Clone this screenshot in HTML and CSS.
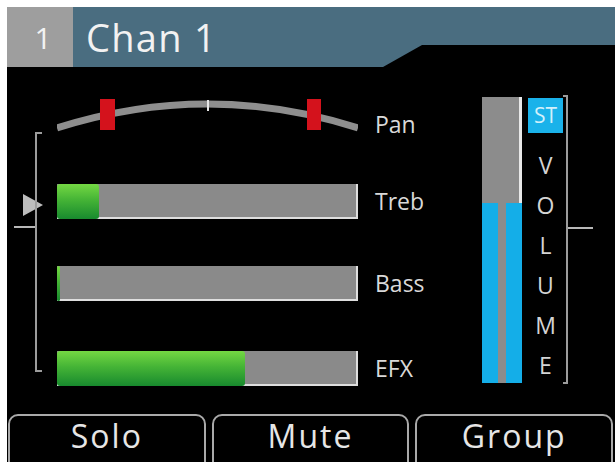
FILE: index.html
```html
<!DOCTYPE html>
<html lang="en">
<head>
<meta charset="utf-8">
<title>Chan 1</title>
<link rel="stylesheet" href="styles.css">
</head>
<body>
<div class="screen">
  <header class="header">
    <div class="chan-num">1</div>
    <div class="chan-title">Chan 1</div>
  </header>

  <main class="main">
    <div class="gutter">
      <span class="pointer"></span>
      <span class="stub"></span>
    </div>
    <div class="brace brace-left"></div>

    <div class="controls">
      <svg class="pan" width="301" height="36" viewBox="0 0 301 36">
        <path d="M0 31 Q150.5 -17 301 31" fill="none" stroke="#8e8e8e" stroke-width="7"/>
        <line x1="151" y1="3" x2="151" y2="14" stroke="#e6e6e6" stroke-width="2"/>
        <rect x="43" y="2" width="15" height="31" fill="#d4121c"/>
        <rect x="250" y="2" width="14" height="31" fill="#d4121c"/>
      </svg>
      <span class="label">Pan</span>

      <div class="track"><div class="fill" style="width:42px"></div></div>
      <span class="label">Treb</span>

      <div class="track"><div class="fill" style="width:3px"></div></div>
      <span class="label">Bass</span>

      <div class="track"><div class="fill" style="width:188px"></div></div>
      <span class="label">EFX</span>
    </div>

    <div class="meter">
      <div class="channel"><div class="level" style="height:63%"></div></div>
      <div class="channel channel-right"><div class="level" style="height:63%"></div></div>
    </div>

    <div class="volume">
      <span class="st">ST</span>
      <span class="letters">V O L U M E</span>
    </div>
    <div class="brace brace-right"></div>
    <span class="stub stub-right"></span>
  </main>

  <nav class="buttons">
    <button class="btn">Solo</button>
    <button class="btn">Mute</button>
    <button class="btn">Group</button>
  </nav>
</div>
</body>
</html>
```

FILE: styles.css
```css
* {
  box-sizing: border-box;
}

html, body {
  margin: 0;
  background: #ffffff;
  overflow: hidden;
}

body {
  font-family: "Open Sans", "Noto Sans", sans-serif;
}

.screen {
  margin: 7px 0 0 7px;
  width: 608px;
  height: 455px;
  background: #000000;
  overflow: hidden;
}

/* title bar */
.header {
  display: flex;
  height: 60px;
  color: #f2f2f2;
}

.chan-num {
  width: 66px;
  flex-shrink: 0;
  background: #9e9e9e;
  font-size: 30px;
  line-height: 60px;
  padding: 1px 0 0 6px;
  text-align: center;
}

.chan-title {
  flex: 1;
  background: #4a6d80;
  font-size: 38px;
  line-height: 60px;
  letter-spacing: 1.3px;
  padding-left: 13px;
  clip-path: polygon(0 0, 100% 0, 100% 38px, 349px 38px, 310px 100%, 0 100%);
}

/* control area */
.main {
  display: flex;
  align-items: flex-start;
  height: 347px;
}

.main > * {
  flex-shrink: 0;
}

.gutter {
  width: 28px;
  display: flex;
  flex-direction: column;
  align-items: flex-start;
}

.pointer {
  margin: 127px 0 0 16px;
  width: 0;
  height: 0;
  border-left: 20px solid #bdbdbd;
  border-top: 11.5px solid transparent;
  border-bottom: 11.5px solid transparent;
}

.stub {
  display: block;
  height: 2px;
  background: #b8b8b8;
}

.gutter .stub {
  margin: 10px 0 0 7px;
  width: 21px;
}

.brace {
  border: 2px solid #9c9c9c;
}

.brace-left {
  margin-top: 65px;
  width: 7px;
  height: 240px;
  border-right: none;
}

.controls {
  margin: 19px 0 0 15px;
  display: grid;
  grid-template-columns: 301px 90px;
  grid-template-rows: 76px 78px 86px 84px;
  column-gap: 17px;
  align-items: center;
}

.pan {
  display: block;
  align-self: start;
  margin-top: 11px;
}

.label {
  color: #d9d9d9;
  font-size: 23px;
  line-height: 30px;
}

.track {
  display: flex;
  height: 35px;
  background: #8a8a8a;
  box-shadow: inset -2px -2px 0 #dedede;
}

.fill {
  height: 100%;
  border-radius: 3px;
  background: linear-gradient(to bottom, #74d843 0%, #45b436 45%, #188a2e 100%);
}

/* volume meter */
.meter {
  margin: 30px 0 0 17px;
  width: 40px;
  height: 286px;
  display: flex;
  align-items: stretch;
  gap: 8px;
  background: #8c8c8c;
}

.channel {
  width: 16px;
  display: flex;
  flex-direction: column;
  justify-content: flex-end;
}

.channel-right {
  background: linear-gradient(to left, #e8e8e8 3px, transparent 3px);
}

.level {
  background: #14aee8;
}

.volume {
  margin: 31px 0 0 6px;
  width: 35px;
  display: flex;
  flex-direction: column;
  align-items: center;
}

.st {
  width: 35px;
  height: 35px;
  background: #1ab2ea;
  color: #d2f0fb;
  font-size: 21px;
  line-height: 35px;
  text-align: center;
}

.letters {
  margin-top: 12px;
  width: 24px;
  color: #d4d4d4;
  font-size: 23px;
  line-height: 40px;
  text-align: center;
  word-spacing: 30px;
}

.brace-right {
  margin-top: 28px;
  width: 5px;
  height: 289px;
  border-left: none;
}

.stub-right {
  margin-top: 160px;
  width: 25px;
}

/* soft keys */
.buttons {
  display: flex;
  gap: 6px;
  margin: 0 2px 0 1px;
}

.btn {
  flex: 1;
  height: 60px;
  padding: 0;
  background: #000000;
  border: 2px solid #a9a9a9;
  border-radius: 10px;
  color: #e6e6e6;
  font-family: "Open Sans", "Noto Sans", sans-serif;
  font-size: 32px;
  line-height: 40px;
  letter-spacing: 2px;
  text-align: center;
  display: flex;
  justify-content: center;
  align-items: flex-start;
}
```
